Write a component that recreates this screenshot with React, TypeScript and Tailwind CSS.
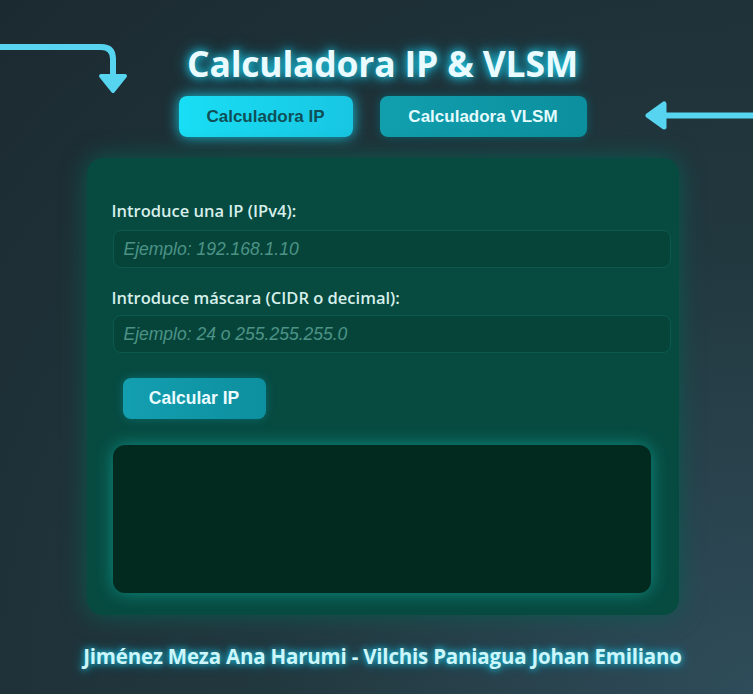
import { useState } from "react";

// decorative arrows pointing at the tab buttons
function ArrowDown() {
  return (
    <svg className="absolute left-0 top-0" width="140" height="100" viewBox="0 0 140 100">
      <path d="M0 47 H101 Q113 47 113 59 V78" fill="none" stroke="#57d4ef" strokeWidth="6" strokeLinecap="round" />
      <path d="M101 76 L125 76 L113 91 Z" fill="#57d4ef" stroke="#57d4ef" strokeWidth="4" strokeLinejoin="round" />
    </svg>
  );
}

function ArrowLeft() {
  return (
    <svg className="absolute right-0 top-[90px]" width="110" height="50" viewBox="0 0 110 50">
      <path d="M110 25.5 H18" fill="none" stroke="#57d4ef" strokeWidth="6" />
      <path d="M21 14 L21 37 L5 25.5 Z" fill="#57d4ef" stroke="#57d4ef" strokeWidth="5" strokeLinejoin="round" />
    </svg>
  );
}

export default function App() {
  const [tab, setTab] = useState<"ip" | "vlsm">("ip");
  const [ip, setIp] = useState("");
  const [mask, setMask] = useState("");

  return (
    <div className="relative h-[694px] w-full overflow-hidden bg-[radial-gradient(ellipse_at_100%_100%,#2f4c5a_0%,#22383f_45%,#1b2a30_100%)] font-['Open_Sans',sans-serif]">
      <ArrowDown />
      <ArrowLeft />

      <div className="flex flex-col items-center pl-[12px] pt-[40px]">
        <h1 className="text-[35.5px] font-bold leading-[46px] tracking-[-0.2px] text-[#e9fbff] [text-shadow:0_0_8px_#22d3ee,0_0_16px_#0ea5c6]">
          Calculadora IP &amp; VLSM
        </h1>

        <div className="mt-[10px] flex gap-[27px] font-['Liberation_Sans',Arial,sans-serif] text-[17px] font-bold">
          <button
            onClick={() => setTab("ip")}
            className={`h-[41px] w-[174px] rounded-[8px] ${
              tab === "ip"
                ? "bg-gradient-to-r from-[#19def5] to-[#18c6e2] text-[#0f4f57] shadow-[0_0_14px_#17c6e0]"
                : "bg-[#0e9aa8] text-[#e3fbff] shadow-[0_0_10px_#0b6f7a]"
            }`}
          >
            Calculadora IP
          </button>
          <button
            onClick={() => setTab("vlsm")}
            className={`h-[41px] w-[207px] rounded-[8px] ${
              tab === "vlsm"
                ? "bg-gradient-to-r from-[#19def5] to-[#18c6e2] text-[#0f4f57] shadow-[0_0_14px_#17c6e0]"
                : "bg-gradient-to-r from-[#119fae] to-[#0c8f9e] text-[#e3fbff] shadow-[0_0_10px_#0b5f6a]"
            }`}
          >
            Calculadora VLSM
          </button>
        </div>

        <div className="mt-[21px] w-[592px] rounded-[16px] bg-[#074a40] pb-[22px] pl-[25px] pr-[8px] pt-[42px] shadow-[0_0_24px_#0b5a50]">
          <label className="block text-[16.5px] font-semibold leading-[22px] text-[#d6efea]">Introduce una IP (IPv4):</label>
          <input
            value={ip}
            onChange={(e) => setIp(e.target.value)}
            placeholder="Ejemplo: 192.168.1.10"
            className="mt-[8px] ml-px block h-[38px] w-[558px] rounded-[8px] border border-[#0c5a4e] bg-[#06443a] px-[10px] font-['Liberation_Sans',Arial,sans-serif] text-[17.5px] italic text-[#d6efea] outline-none placeholder:text-[#4c9386]"
          />

          <label className="mt-[19px] block text-[16.5px] font-semibold leading-[22px] text-[#d6efea]">
            Introduce máscara (CIDR o decimal):
          </label>
          <input
            value={mask}
            onChange={(e) => setMask(e.target.value)}
            placeholder="Ejemplo: 24 o 255.255.255.0"
            className="mt-[6px] ml-px block h-[38px] w-[558px] rounded-[8px] border border-[#0c5a4e] bg-[#06443a] px-[10px] font-['Liberation_Sans',Arial,sans-serif] text-[17.5px] italic text-[#d6efea] outline-none placeholder:text-[#4c9386]"
          />

          <button className="ml-[11px] mt-[25px] h-[41px] w-[143px] rounded-[8px] bg-gradient-to-r from-[#139fb0] to-[#0d8f9f] font-['Liberation_Sans',Arial,sans-serif] text-[17.5px] font-bold text-[#eafcff] shadow-[0_0_10px_#0a6b70]">
            Calcular IP
          </button>

          <div className="ml-px mt-[26px] h-[148px] w-[538px] rounded-[12px] bg-[#022a1f] shadow-[0_0_18px_#0f8c80]" />
        </div>

        <p className="mt-[26px] text-[20.5px] font-bold tracking-[-0.2px] text-[#cdf6fb] [text-shadow:0_0_6px_#22c5e0,0_0_12px_#0e8fb0]">
          Jiménez Meza Ana Harumi - Vilchis Paniagua Johan Emiliano
        </p>
      </div>
    </div>
  );
}
